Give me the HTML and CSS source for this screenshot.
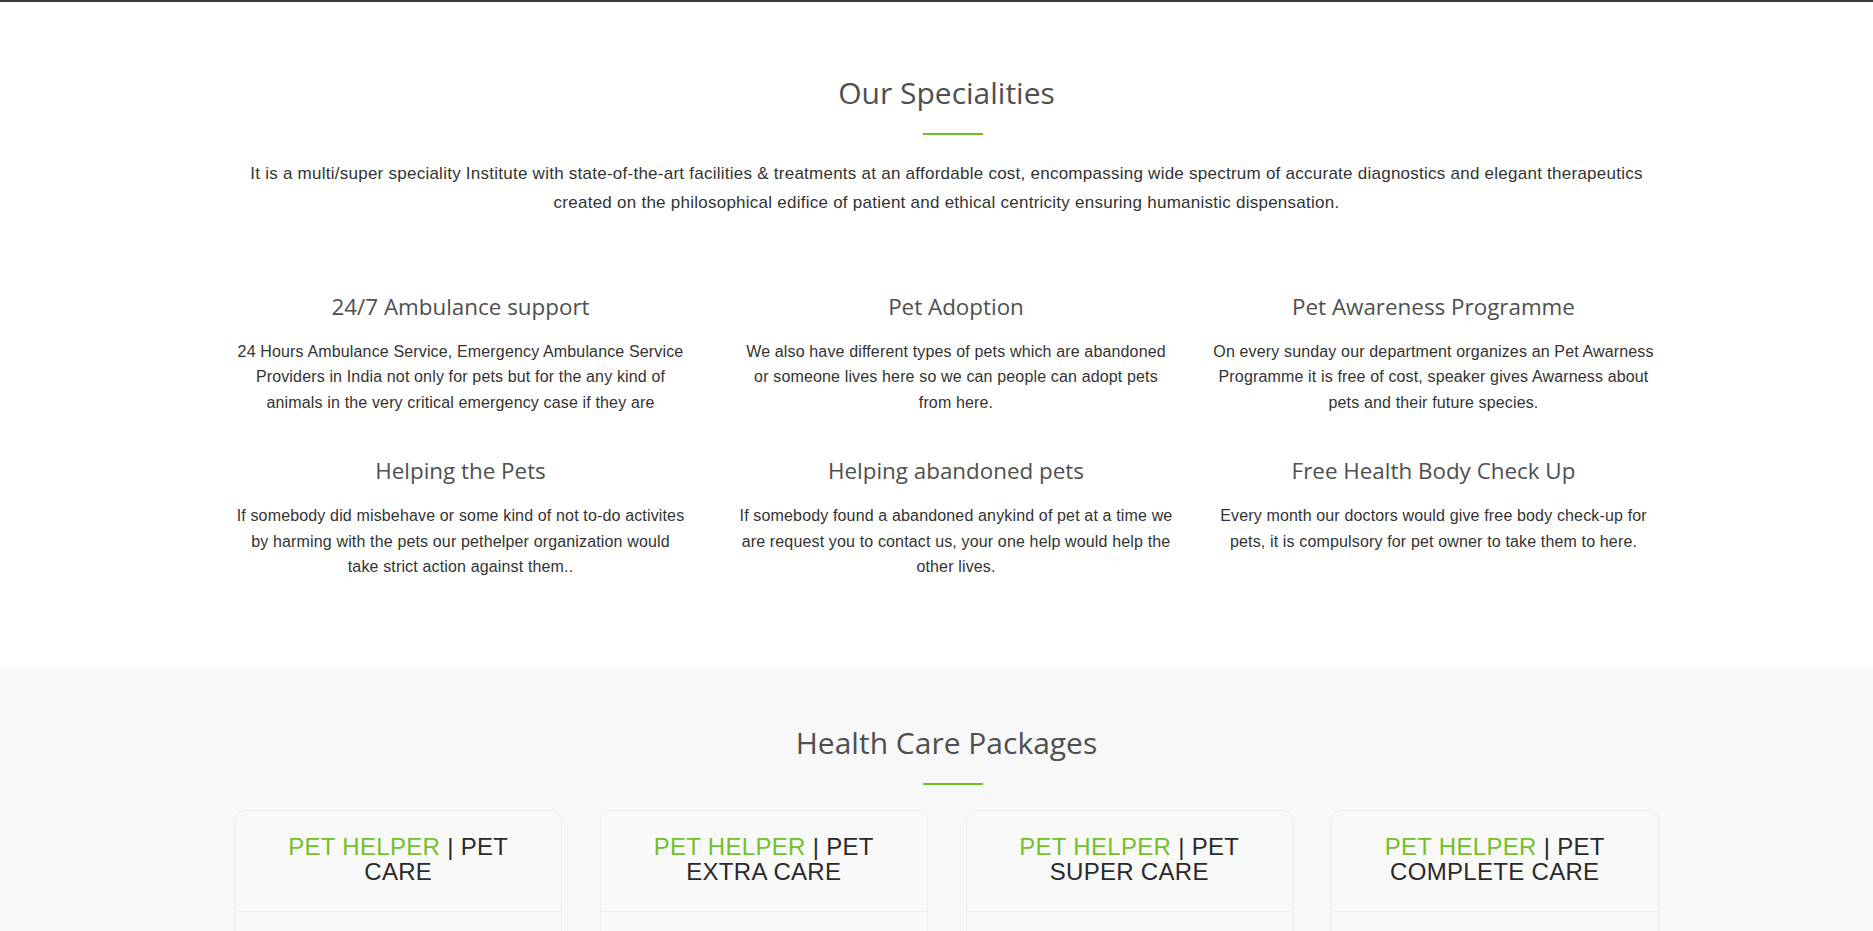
FILE: index.html
```html
<!DOCTYPE html>
<html lang="en">
<head>
<meta charset="utf-8">
<title>Our Specialities</title>
<link rel="stylesheet" href="styles.css">
</head>
<body>
<section class="specialities">
  <div class="container">
    <h2 class="section-title">Our Specialities</h2>
    <div class="title-bar"></div>
    <p class="intro">It is a multi/super speciality Institute with state-of-the-art facilities &amp; treatments at an affordable cost, encompassing wide spectrum of accurate diagnostics and elegant therapeutics created on the philosophical edifice of patient and ethical centricity ensuring humanistic dispensation.</p>
    <div class="features">
      <div class="feature">
        <h3 class="feature-title">24/7 Ambulance support</h3>
        <p class="feature-text">24 Hours Ambulance Service, Emergency Ambulance Service Providers in India not only for pets but for the any kind of animals in the very critical emergency case if they are</p>
      </div>
      <div class="feature feature-mid">
        <h3 class="feature-title">Pet Adoption</h3>
        <p class="feature-text">We also have different types of pets which are abandoned or someone lives here so we can people can adopt pets from here.</p>
      </div>
      <div class="feature">
        <h3 class="feature-title">Pet Awareness Programme</h3>
        <p class="feature-text">On every sunday our department organizes an Pet Awarness Programme it is free of cost, speaker gives Awarness about pets and their future species.</p>
      </div>
      <div class="feature">
        <h3 class="feature-title">Helping the Pets</h3>
        <p class="feature-text">If somebody did misbehave or some kind of not to-do activites by harming with the pets our pethelper organization would take strict action against them..</p>
      </div>
      <div class="feature feature-mid">
        <h3 class="feature-title">Helping abandoned pets</h3>
        <p class="feature-text">If somebody found a abandoned anykind of pet at a time we are request you to contact us, your one help would help the other lives.</p>
      </div>
      <div class="feature">
        <h3 class="feature-title">Free Health Body Check Up</h3>
        <p class="feature-text">Every month our doctors would give free body check-up for pets, it is compulsory for pet owner to take them to here.</p>
      </div>
    </div>
  </div>
</section>

<section class="packages">
  <div class="container">
    <h2 class="section-title">Health Care Packages</h2>
    <div class="title-bar"></div>
    <div class="cards">
      <div class="card">
        <div class="card-head"><span class="brand">PET HELPER</span> | PET<br>CARE</div>
        <div class="card-body"></div>
      </div>
      <div class="card">
        <div class="card-head"><span class="brand">PET HELPER</span> | PET<br>EXTRA CARE</div>
        <div class="card-body"></div>
      </div>
      <div class="card">
        <div class="card-head"><span class="brand">PET HELPER</span> | PET<br>SUPER CARE</div>
        <div class="card-body"></div>
      </div>
      <div class="card">
        <div class="card-head"><span class="brand">PET HELPER</span> | PET<br>COMPLETE CARE</div>
        <div class="card-body"></div>
      </div>
    </div>
  </div>
</section>
</body>
</html>
```

FILE: styles.css
```css
* { box-sizing: border-box; }

html, body {
  margin: 0;
  padding: 0;
  background: #ffffff;
  font-family: "Liberation Sans", Arial, sans-serif;
  color: #333333;
}

.container {
  width: 1424px;
  margin: 0 0 0 calc(50% - 702px);
}

.specialities {
  border-top: 2px solid #3a3a3a;
  background: #ffffff;
  padding: 73px 0 87px;
}

.section-title {
  margin: 0;
  font-family: "Open Sans", "Liberation Sans", sans-serif;
  font-weight: 400;
  font-size: 30px;
  line-height: 36px;
  color: #4f4f4f;
  text-align: center;
}

.title-bar {
  width: 60px;
  height: 2px;
  background: #72bf2c;
  margin: 22px 0 0 calc(50% - 24px);
}

.intro {
  max-width: 1420px;
  margin: 25px auto 0;
  font-size: 17px;
  line-height: 28.8px;
  letter-spacing: 0.25px;
  text-align: center;
  color: #333333;
}

.features {
  display: grid;
  grid-template-columns: 452px 1fr 450px;
  row-gap: 41.5px;
  margin-top: 75.5px;
}

.feature {
  text-align: center;
}

.feature-mid {
  padding: 0 35px 0 52px;
}

.feature-title {
  margin: 0 0 17px;
  font-family: "Open Sans", "Liberation Sans", sans-serif;
  font-weight: 400;
  font-size: 22.4px;
  line-height: 28.8px;
  color: #4f4f4f;
}

.feature-text {
  margin: 0;
  font-size: 16px;
  line-height: 25.6px;
  letter-spacing: 0.15px;
  color: #333333;
}

.packages {
  background: #f8f8f8;
  padding: 58px 0 60px;
}

.cards {
  display: grid;
  grid-template-columns: repeat(4, 1fr);
  column-gap: 38px;
  margin-top: 25px;
}

.card {
  border: 1px solid #eceef3;
  border-radius: 10px;
  background: #f9f9fa;
  overflow: hidden;
}

.card-head {
  padding: 23px 15px 27px;
  text-align: center;
  font-size: 24px;
  line-height: 25px;
  letter-spacing: 0.3px;
  color: #2a2a2a;
  border-bottom: 1px solid #eceef3;
}

.brand {
  color: #72c02c;
}

.card-body {
  height: 160px;
}
```
